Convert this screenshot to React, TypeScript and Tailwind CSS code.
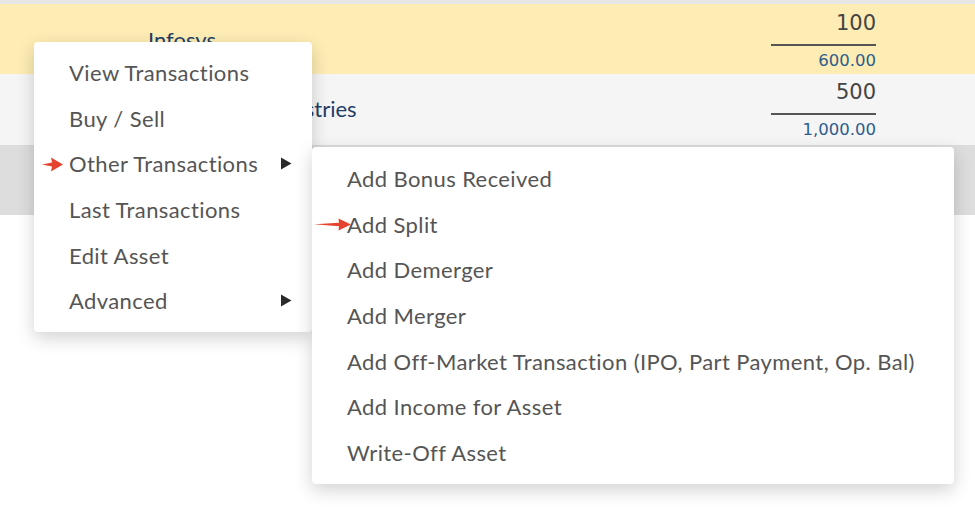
import { ReactNode } from 'react';

const menuFont = { fontFamily: 'Lato, "Noto Sans", sans-serif' };

function Caret() {
    return (
        <svg width="12" height="13" viewBox="0 0 12 13" className="text-[#2b2b2b]">
            <path d="M1 0.5 L11.5 6.5 L1 12.5 Z" fill="currentColor" />
        </svg>
    );
}

function MenuItem({ children, caret = false }: { children: ReactNode; caret?: boolean }) {
    return (
        <div className="flex h-[45.6px] items-center justify-between pl-[35px] pr-[20px]">
            <span>{children}</span>
            {caret && <Caret />}
        </div>
    );
}

function NumberCell({ qty, value }: { qty: string; value: string }) {
    return (
        <div
            className="flex w-[105px] flex-col items-end"
            style={{ fontFamily: '"DejaVu Sans", Verdana, sans-serif' }}
        >
            <div className="h-[38px] w-full border-b-2 border-[#555] pt-[2px] text-right text-[21px] leading-[26px] text-[#444]">
                {qty}
            </div>
            <div className="pt-[5px] text-[16.5px] leading-[20px] text-[#2c5d8f]">{value}</div>
        </div>
    );
}

export default function App() {
    const items = [
        'Add Bonus Received',
        'Add Split',
        'Add Demerger',
        'Add Merger',
        'Add Off-Market Transaction (IPO, Part Payment, Op. Bal)',
        'Add Income for Asset',
        'Write-Off Asset',
    ];

    return (
        <div className="relative h-[511px] w-[975px] overflow-hidden bg-white" style={menuFont}>
            <div className="h-[4px] bg-[#e6e6e6]" />
            <div className="flex h-[70px] items-start bg-[#fdecb3]">
                <div className="flex-1 pl-[148px] pt-[22px] text-[22px] leading-[28px] text-[#1f3d66]">Infosys</div>
                <div className="pr-[99px] pt-[4px]">
                    <NumberCell qty="100" value="600.00" />
                </div>
            </div>
            <div className="flex h-[71px] items-start bg-[#f5f5f5]">
                <div className="flex-1 pl-[176px] pt-[21px] text-[22px] leading-[28px] text-[#1f3d66]">
                    Reliance Industries
                </div>
                <div className="pr-[99px] pt-[3px]">
                    <NumberCell qty="500" value="1,000.00" />
                </div>
            </div>
            <div className="h-[70px] bg-[#dddddd]" />

            <div className="absolute left-[34px] top-[42px] w-[278px] rounded-[4px] bg-white py-[8px] text-[22px] tracking-[0.4px] text-[#555] shadow-[0_6px_18px_rgba(0,0,0,0.18)]">
                <MenuItem>View Transactions</MenuItem>
                <MenuItem>Buy / Sell</MenuItem>
                <MenuItem caret>Other Transactions</MenuItem>
                <MenuItem>Last Transactions</MenuItem>
                <MenuItem>Edit Asset</MenuItem>
                <MenuItem caret>Advanced</MenuItem>
            </div>

            <div className="absolute left-[312px] top-[147px] w-[642px] rounded-[4px] bg-white py-[9px] text-[22px] tracking-[0.4px] text-[#555] shadow-[0_6px_18px_rgba(0,0,0,0.18)]">
                {items.map((label) => (
                    <MenuItem key={label}>{label}</MenuItem>
                ))}
            </div>

            <svg className="absolute left-[42px] top-[157px]" width="21" height="15" viewBox="0 0 21 15">
                <path d="M0 7.5 L10 5.5 L9 0.5 L21 7.5 L9 14.5 L10 9.5 Z" fill="#e5432f" />
            </svg>
            <svg className="absolute left-[314px] top-[217px]" width="37" height="15" viewBox="0 0 37 15">
                <path d="M0 7.3 L25 5.8 L24.5 1.5 L37 7.5 L24.5 13.5 L25 9.2 Z" fill="#e5432f" />
            </svg>
        </div>
    );
}
